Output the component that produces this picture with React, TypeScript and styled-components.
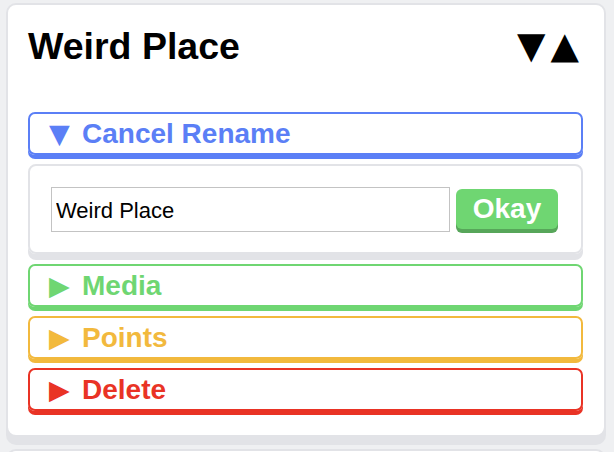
import React from "react";
import styled, { createGlobalStyle } from "styled-components";

const Global = createGlobalStyle`
  html, body { margin: 0; padding: 0; background: #eff0f2; }
  body { font-family: "Liberation Sans", Arial, sans-serif; }
  * { box-sizing: border-box; }
`;

const Page = styled.div`
  padding: 3px 8px 0 6px;
  display: flex;
  flex-direction: column;
  gap: 12px;
  height: 452px;
  overflow: hidden;
`;

const Card = styled.div`
  background: #fff;
  border: 2px solid #e2e3e7;
  border-radius: 10px;
  box-shadow: 0 8px 0 #e2e3e7;
  padding: 18px 21px 24px 20px;
  display: flex;
  flex-direction: column;
  flex-shrink: 0;
`;

const Header = styled.div`
  display: flex;
  align-items: center;
  justify-content: space-between;
  margin-bottom: 43px;
`;

const Title = styled.h1`
  margin: 0;
  font-size: 37.5px;
  line-height: 46px;
  font-weight: 700;
  color: #000;
`;

const Arrows = styled.div`
  display: flex;
  align-items: center;
  gap: 5px;
  margin-right: 4px;
`;

const Arrow = styled.span`
  font-family: "DejaVu Sans", sans-serif;
  font-size: 37px;
  line-height: 46px;
  color: #000;
`;

const List = styled.div`
  display: flex;
  flex-direction: column;
  gap: 9px;
`;

const Bar = styled.div<{ $color: string }>`
  height: 43px;
  border: 2px solid ${(p) => p.$color};
  border-radius: 7px;
  box-shadow: 0 4px 0 ${(p) => p.$color};
  color: ${(p) => p.$color};
  display: flex;
  align-items: center;
  padding-left: 19px;
  font-size: 28px;
  font-weight: 700;
`;

const Tri = styled.span`
  font-family: "DejaVu Sans", sans-serif;
  font-size: 27px;
  width: 33px;
  display: inline-block;
  line-height: 1;
`;

const Panel = styled.div`
  height: 90px;
  border: 2px solid #e2e3e7;
  border-radius: 8px;
  box-shadow: 0 6px 0 #e2e3e7;
  padding: 21px 23px 0 21px;
  display: flex;
  align-items: flex-start;
  gap: 6px;
  margin-bottom: 1px;
`;

const Input = styled.input`
  flex: 1;
  height: 45px;
  border: 1px solid #c3c3c3;
  padding: 0 4px;
  font-family: "Liberation Sans", Arial, sans-serif;
  font-size: 22px;
  color: #000;
  outline: none;
  background: #fff;
  padding-top: 3px;
`;

const OkButton = styled.button`
  margin-top: 2px;
  width: 102px;
  height: 40px;
  border: none;
  border-radius: 6px;
  background: #6fd672;
  box-shadow: 0 4px 0 #57a65a;
  color: #fff;
  font-family: "Liberation Sans", Arial, sans-serif;
  font-size: 28px;
  font-weight: 700;
  padding: 0;
`;

const NextCard = styled.div`
  height: 40px;
  background: #fff;
  border: 2px solid #e2e3e7;
  border-radius: 10px;
  flex-shrink: 0;
`;

export default function App() {
  return (
    <>
      <Global />
      <Page>
        <Card>
          <Header>
            <Title>Weird Place</Title>
            <Arrows>
              <Arrow>▼</Arrow>
              <Arrow>▲</Arrow>
            </Arrows>
          </Header>
          <List>
            <Bar $color="#5b7ff6">
              <Tri>▼</Tri>Cancel Rename
            </Bar>
            <Panel>
              <Input defaultValue="Weird Place" />
              <OkButton>Okay</OkButton>
            </Panel>
            <Bar $color="#6fd672">
              <Tri>▶</Tri>Media
            </Bar>
            <Bar $color="#f2b93d">
              <Tri>▶</Tri>Points
            </Bar>
            <Bar $color="#e93325">
              <Tri>▶</Tri>Delete
            </Bar>
          </List>
        </Card>
        <NextCard />
      </Page>
    </>
  );
}
